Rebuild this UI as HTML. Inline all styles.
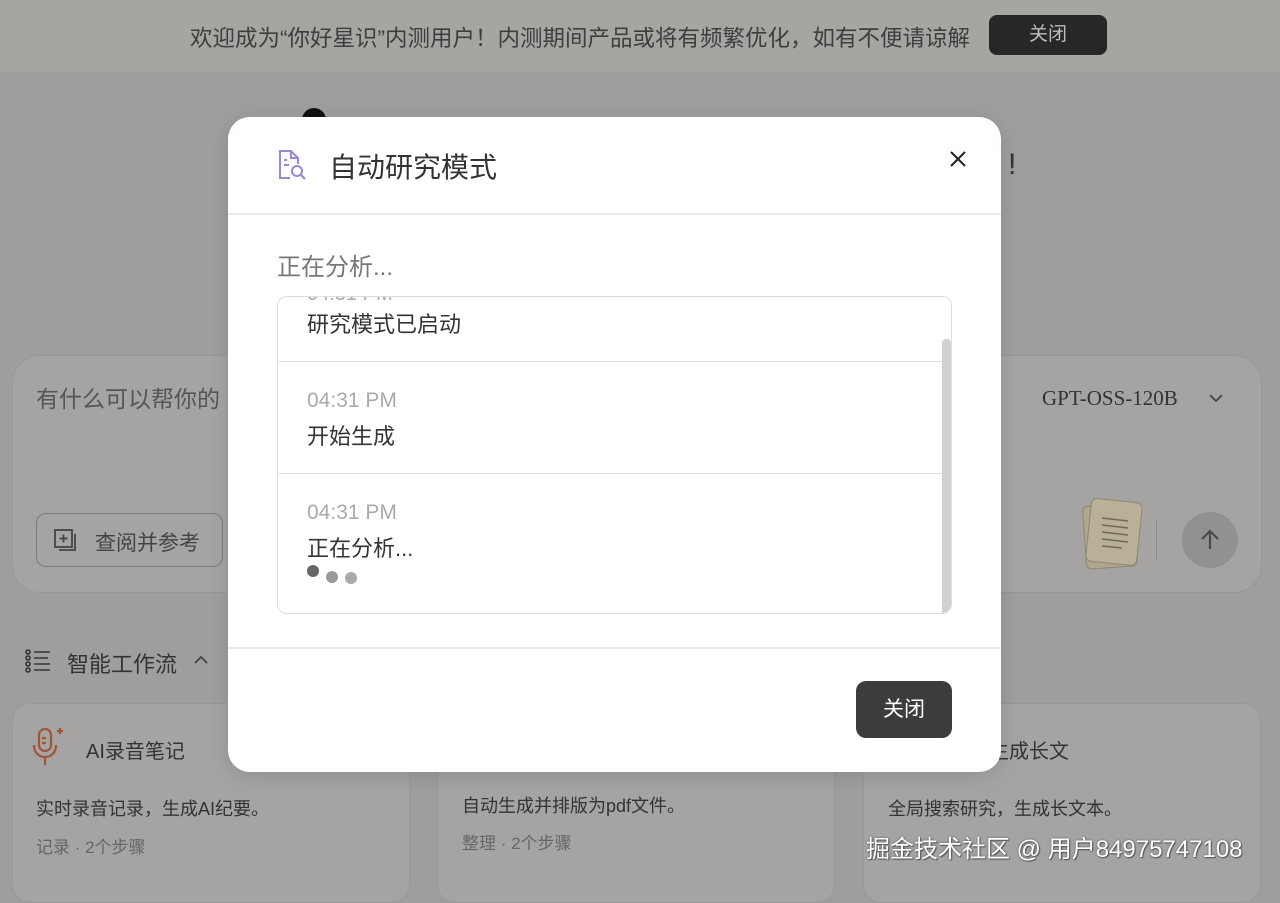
<!DOCTYPE html>
<html><head><meta charset="utf-8"><style>
*{margin:0;padding:0;box-sizing:border-box}
body{width:1280px;height:883px;overflow:hidden;background:#9f9e9c;font-family:"Liberation Sans","Noto Sans CJK SC",sans-serif;position:relative;color:#2a2a2a}
.abs{position:absolute}
.banner{left:0;top:0;width:1280px;height:72px;background:#a6a5a2}
.card{background:#a5a4a2;border:1px solid #999896}
</style></head><body>
<div class="abs banner"></div>
<div class="abs" style="left:190px;top:21px;font-size:22.5px;color:#3e3e3d;white-space:nowrap">欢迎成为“你好星识”内测用户！内测期间产品或将有频繁优化，如有不便请谅解</div>
<div class="abs" style="left:989px;top:15px;width:118px;height:40px;background:#272726;border-radius:8px;color:#bdbdbb;font-size:19px;text-align:center;line-height:40px">关闭</div>
<div class="abs" style="left:302px;top:108px;width:24px;height:14px;background:#111;border-radius:12px 12px 0 0"></div>
<div class="abs" style="left:1008px;top:148px;font-size:30px;color:#333">!</div>
<div class="abs card" style="left:12px;top:355px;width:1250px;height:238px;border-radius:28px"></div>
<div class="abs" style="left:36px;top:380px;font-size:23px;color:#555">有什么可以帮你的</div>
<div class="abs" style="left:1042px;top:386px;font-size:21px;color:#333;font-family:'Liberation Serif',serif">GPT-OSS-120B</div>
<svg class="abs" style="left:1208px;top:391px" width="16" height="14" viewBox="0 0 16 14" fill="none" stroke="#444" stroke-width="1.8"><path d="M2 4l6 6 6-6"/></svg>
<div class="abs" style="left:36px;top:513px;width:187px;height:54px;border:1.5px solid #7d7c7a;border-radius:10px"></div>
<svg class="abs" style="left:52px;top:527px" width="26" height="26" viewBox="0 0 26 26" fill="none" stroke="#444" stroke-width="1.8"><rect x="3" y="3" width="17" height="17"/><path d="M7 23h16V7M11.5 7.5v8M7.5 11.5h8"/></svg>
<div class="abs" style="left:95px;top:527px;font-size:21px;color:#444">查阅并参考</div>
<div class="abs" style="left:1084px;top:504px;width:52px;height:64px;background:#aea78e;border:1px solid #8e8870;border-radius:6px;transform:rotate(-4deg)"></div>
<div class="abs" style="left:1088px;top:500px;width:52px;height:64px;background:#b8b197;border:1px solid #8e8870;border-radius:6px;transform:rotate(6deg)"></div>
<svg class="abs" style="left:1098px;top:512px" width="36" height="44" viewBox="0 0 36 44" stroke="#6e6a5a" stroke-width="1.5"><path d="M4 6l26 3M4 13l26 3M4 20l26 3M4 27l26 3M4 34l20 2"/></svg>
<div class="abs" style="left:1156px;top:520px;width:1px;height:40px;background:#8e8d8b"></div>
<div class="abs" style="left:1182px;top:512px;width:56px;height:56px;border-radius:50%;background:#929190"></div>
<svg class="abs" style="left:1196px;top:526px" width="28" height="28" viewBox="0 0 28 28" fill="none" stroke="#4a4a4a" stroke-width="2.2"><path d="M14 23V5M6 13l8-8 8 8"/></svg>
<svg class="abs" style="left:24px;top:648px" width="28" height="26" viewBox="0 0 28 26" fill="none" stroke="#333" stroke-width="1.6"><circle cx="4" cy="4" r="2"/><circle cx="4" cy="10" r="2"/><circle cx="4" cy="16" r="2"/><circle cx="4" cy="22" r="2"/><path d="M10 4h16M10 10h14M10 16h16M10 22h16"/></svg>
<div class="abs" style="left:67px;top:647px;font-size:22px;color:#333">智能工作流</div>
<svg class="abs" style="left:193px;top:654px" width="16" height="12" viewBox="0 0 16 12" fill="none" stroke="#444" stroke-width="1.8"><path d="M2 9l6-6 6 6"/></svg>
<div class="abs card" style="left:12px;top:703px;width:398px;height:200px;border-radius:18px"></div>
<div class="abs card" style="left:437px;top:703px;width:398px;height:200px;border-radius:18px"></div>
<div class="abs card" style="left:863px;top:703px;width:398px;height:200px;border-radius:18px"></div>
<svg class="abs" style="left:30px;top:725px" width="40" height="44" viewBox="0 0 40 44" fill="none" stroke="#a0543a" stroke-width="2.2"><rect x="9" y="4" width="12" height="22" rx="6"/><path d="M4 20c0 8 5 12 11 12s11-4 11-12M15 32v8M12 13h4M12 18h4M30 3v6M27 6h6"/></svg>
<div class="abs" style="left:86px;top:735px;font-size:20px;color:#333">AI录音笔记</div>
<div class="abs" style="left:36px;top:795px;font-size:18px;color:#333">实时录音记录，生成AI纪要。</div>
<div class="abs" style="left:36px;top:833px;font-size:17px;color:#666">记录 · 2个步骤</div>
<div class="abs" style="left:462px;top:792px;font-size:18px;color:#333">自动生成并排版为pdf文件。</div>
<div class="abs" style="left:462px;top:829px;font-size:17px;color:#666">整理 · 2个步骤</div>
<div class="abs" style="left:989px;top:735px;font-size:20px;color:#333">生成长文</div>
<div class="abs" style="left:888px;top:795px;font-size:18px;color:#333">全局搜索研究，生成长文本。</div>
<div class="abs" style="left:866px;top:829px;font-size:24px;color:#fff;text-shadow:0 0 2px #555,1px 1px 1px #555">掘金技术社区 @ 用户84975747108</div>

<div class="abs" style="left:228px;top:117px;width:773px;height:655px;background:#fff;border-radius:22px;box-shadow:0 4px 20px rgba(0,0,0,.12)"></div>
<svg class="abs" style="left:276px;top:148px" width="34" height="34" viewBox="0 0 34 34" fill="none" stroke="#9a88d0" stroke-width="2"><path d="M14 30H4V3h11l7 7v6"/><path d="M15 3v7h7M8 12h3M8 17h5"/><circle cx="21" cy="23" r="5"/><path d="M25 27l4 4"/></svg>
<div class="abs" style="left:329px;top:146px;font-size:28px;color:#333">自动研究模式</div>
<svg class="abs" style="left:948px;top:149px" width="20" height="20" viewBox="0 0 20 20" stroke="#222" stroke-width="2"><path d="M3 3l14 14M17 3L3 17"/></svg>
<div class="abs" style="left:228px;top:213px;width:773px;height:1.5px;background:#e8e8e8"></div>
<div class="abs" style="left:277px;top:247px;font-size:24px;color:#777">正在分析...</div>
<div class="abs" style="left:277px;top:296px;width:675px;height:318px;border:1px solid #ddd;border-radius:10px;overflow:hidden">
 <div class="abs" style="left:29px;top:-14px;font-size:20px;color:#aaa">04:31 PM</div>
 <div class="abs" style="left:29px;top:10px;font-size:22px;color:#333">研究模式已启动</div>
 <div class="abs" style="left:0;top:64px;width:664px;height:1px;background:#ddd"></div>
 <div class="abs" style="left:29px;top:92px;font-size:21px;color:#aaa">04:31 PM</div>
 <div class="abs" style="left:29px;top:122px;font-size:22px;color:#333">开始生成</div>
 <div class="abs" style="left:0;top:176px;width:664px;height:1px;background:#ddd"></div>
 <div class="abs" style="left:29px;top:204px;font-size:21px;color:#aaa">04:31 PM</div>
 <div class="abs" style="left:29px;top:234px;font-size:22px;color:#333">正在分析...</div>
 <div class="abs" style="left:29px;top:268px;width:12px;height:12px;border-radius:50%;background:#666"></div>
 <div class="abs" style="left:48px;top:274px;width:12px;height:12px;border-radius:50%;background:#999"></div>
 <div class="abs" style="left:67px;top:275px;width:12px;height:12px;border-radius:50%;background:#aaa"></div>
 <div class="abs" style="left:664px;top:42px;width:9px;height:276px;background:#d0d0d0;border-radius:4px"></div>
</div>
<div class="abs" style="left:228px;top:647px;width:773px;height:1.5px;background:#e8e8e8"></div>
<div class="abs" style="left:856px;top:681px;width:96px;height:57px;background:#3c3c3a;border-radius:10px;color:#fff;font-size:21px;text-align:center;line-height:57px">关闭</div>
</body></html>
